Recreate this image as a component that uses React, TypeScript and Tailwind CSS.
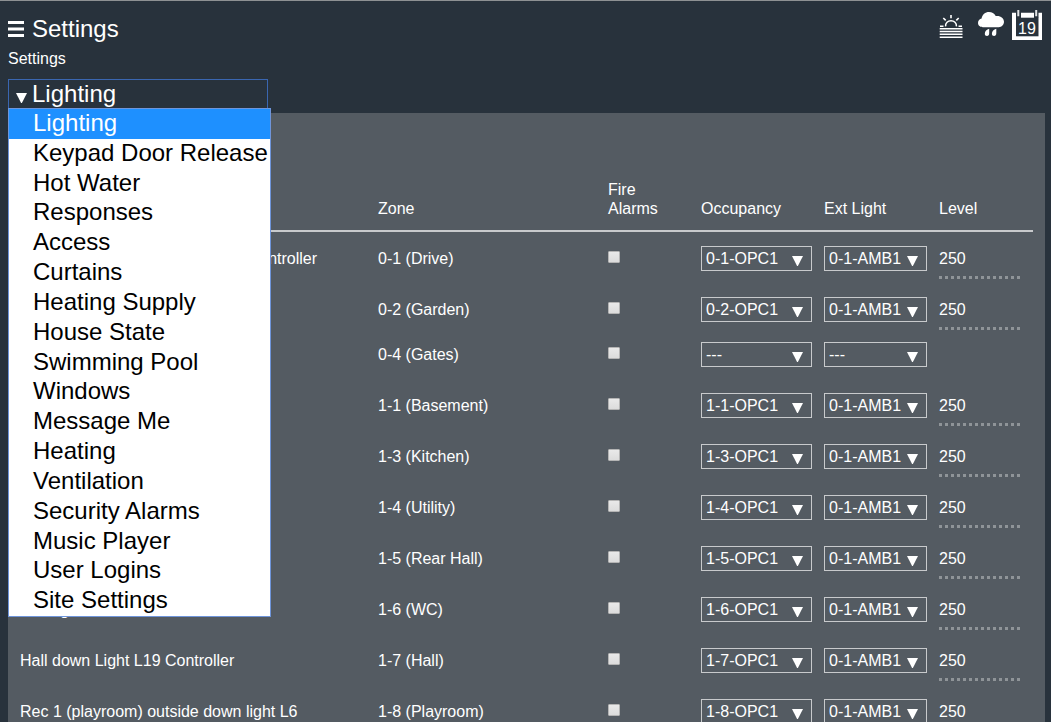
const SECTIONS = [
  "Lighting",
  "Keypad Door Release",
  "Hot Water",
  "Responses",
  "Access",
  "Curtains",
  "Heating Supply",
  "House State",
  "Swimming Pool",
  "Windows",
  "Message Me",
  "Heating",
  "Ventilation",
  "Security Alarms",
  "Music Player",
  "User Logins",
  "Site Settings",
];

type Zone = { name?: string; zone: string; occupancy: string; ext: string; level?: string };

const ZONES: Zone[] = [
  { name: "Drive and front garden lights L1 Controller", zone: "0-1 (Drive)", occupancy: "0-1-OPC1", ext: "0-1-AMB1", level: "250" },
  { zone: "0-2 (Garden)", occupancy: "0-2-OPC1", ext: "0-1-AMB1", level: "250" },
  { zone: "0-4 (Gates)", occupancy: "---", ext: "---" },
  { zone: "1-1 (Basement)", occupancy: "1-1-OPC1", ext: "0-1-AMB1", level: "250" },
  { zone: "1-3 (Kitchen)", occupancy: "1-3-OPC1", ext: "0-1-AMB1", level: "250" },
  { zone: "1-4 (Utility)", occupancy: "1-4-OPC1", ext: "0-1-AMB1", level: "250" },
  { zone: "1-5 (Rear Hall)", occupancy: "1-5-OPC1", ext: "0-1-AMB1", level: "250" },
  { name: "Ceiling WC", zone: "1-6 (WC)", occupancy: "1-6-OPC1", ext: "0-1-AMB1", level: "250" },
  { name: "Hall down Light L19 Controller", zone: "1-7 (Hall)", occupancy: "1-7-OPC1", ext: "0-1-AMB1", level: "250" },
  { name: "Rec 1 (playroom) outside down light L6", zone: "1-8 (Playroom)", occupancy: "1-8-OPC1", ext: "0-1-AMB1", level: "250" },
];

function Arrow({ className }: { className: string }) {
  return (
    <svg viewBox="0 0 11 10" className={className} aria-hidden="true">
      <path d="M0 0H11L5.9 10H5.1Z" fill="#fff" />
    </svg>
  );
}

function SmallSelect({ label, value, className }: { label: string; value: string; className: string }) {
  return (
    <div className={`relative h-[25px] ${className}`}>
      <select
        aria-label={label}
        defaultValue={value}
        className="block h-full w-full appearance-none border border-[#c8cacc] bg-transparent pl-1 text-base leading-[19px] text-white"
      >
        <option className="text-black">{value}</option>
      </select>
      <Arrow className="pointer-events-none absolute top-[10px] right-[9px] h-[10px] w-[11px]" />
    </div>
  );
}

function SunsetIcon() {
  return (
    <svg viewBox="0 0 24 30" className="h-[30px] w-6" fill="none" stroke="#fff" aria-label="Sunset">
      <path d="M6.600 16.400C6.300 12.800 8.900 10.800 12 10.800s5.700 2 5.400 5.600" strokeWidth="1.500" />
      <path d="M1 16.300h3.500M19.500 16.300H23" strokeWidth="1.500" />
      <path d="M12 5v3.200M4.300 8l2.400 2.400M19.700 8l-2.400 2.400" strokeWidth="1.600" />
      <path d="M.7 18.700h22.800M.7 21.500h22.800M.7 24.300h22.800M.7 27.200h22.800" strokeWidth="1.600" />
    </svg>
  );
}

function RainIcon() {
  return (
    <svg viewBox="0 -2 26 30" className="h-[30px] w-[26px]" fill="#fff" aria-label="Rain">
      <path d="M5 15.200C2.200 15.200 0 13.400 0 11c0-2.300 1.600-4 3.600-4.400C4.100 2.700 7.300 0 11 0c2.900 0 5.400 1.500 6.700 4C22.300 3.300 26 6 26 9.800c0 3-2.300 5.400-5.300 5.400Z" />
      <path d="M11.200 16.800v4.500c0 1.700-.9 2.700-2.200 2.700s-2.200-1-2.200-2.300c0-2.200 1.900-4.300 4.400-4.900ZM18.300 16.800v4.500c0 1.700-.9 2.700-2.200 2.700s-2.200-1-2.200-2.300c0-2.200 1.900-4.300 4.400-4.900Z" />
    </svg>
  );
}

function CalendarIcon() {
  return (
    <svg viewBox="0 0 30 30" className="size-[30px]" aria-label="Calendar">
      <path d="M0 2.700H4V8H9V2.700H22V8H26.500V2.700H30V30H0Z" fill="#fff" />
      <path d="M4 7.700h22.500V26.300H4Z" fill="#28323c" />
      <path d="M5.300 0h2v6.300h-2ZM23.200 0h2v6.300h-2Z" fill="#e2e4e6" />
      <text x="15" y="24" textAnchor="middle" fontSize="16" fill="#fff" fontFamily="Liberation Sans, sans-serif">
        19
      </text>
    </svg>
  );
}

export default function App() {
  return (
    <div className="h-screen overflow-hidden border-t border-[#8e9193] bg-[#28323c] font-['Liberation_Sans',Arial,sans-serif] text-base leading-[19px] text-white">
      <header className="flex items-start justify-between pt-[9px] pr-[9px] pl-2">
        <div>
          <div className="flex h-[38px] items-center gap-2">
            <button type="button" aria-label="Menu" className="block">
              <svg viewBox="0 0 16 16" className="size-4" fill="#fff" aria-hidden="true">
                <path d="M0 0h16v3H0ZM0 6.500h16v3H0ZM0 13h16v3H0Z" />
              </svg>
            </button>
            <h1 className="text-2xl leading-7">Settings</h1>
          </div>
          <label htmlFor="section" className="block leading-[22px]">
            Settings
          </label>
        </div>
        <div className="flex items-center gap-2">
          <div className="flex items-center gap-[15px]">
            <SunsetIcon />
            <RainIcon />
          </div>
          <CalendarIcon />
        </div>
      </header>

      <div className="relative z-10 mt-[9px] ml-2 w-[260px]">
        <select
          id="section"
          defaultValue="Lighting"
          className="block h-[30px] w-full appearance-none border border-[#3a66b0] bg-transparent pl-[23px] text-2xl leading-7 text-white outline-none"
        >
          {SECTIONS.map((s) => (
            <option key={s} className="text-black">
              {s}
            </option>
          ))}
        </select>
        <Arrow className="pointer-events-none absolute top-[14px] left-2 h-[10px] w-[11px]" />
        <ul
          role="listbox"
          aria-label="Sections"
          className="absolute top-[29px] left-0 flex h-[509px] w-[263px] flex-col border border-[#6f95da] bg-white text-2xl text-black"
        >
          {SECTIONS.map((s, i) => (
            <li
              key={s}
              role="option"
              aria-selected={i === 0}
              className="flex flex-1 items-center pb-[2px] pl-6 leading-[26px] whitespace-nowrap aria-selected:bg-[#1e90ff] aria-selected:text-white"
            >
              {s}
            </li>
          ))}
        </ul>
      </div>

      <main className="mt-1 mr-[6px] ml-2 bg-[#545b62] px-3 pt-[67px]">
        <table className="w-full table-fixed border-separate border-spacing-0 text-left">
          <colgroup>
            <col />
            <col className="w-[230px]" />
            <col className="w-[93px]" />
            <col className="w-[123px]" />
            <col className="w-[115px]" />
            <col className="w-[94px]" />
          </colgroup>
          <thead>
            <tr className="align-bottom [&>*]:border-b-2 [&>*]:border-[#c8cacc] [&>*]:p-0 [&>*]:pb-3 [&>*]:font-normal">
              <td />
              <th>Zone</th>
              <th>
                Fire
                <br />
                Alarms
              </th>
              <th>Occupancy</th>
              <th>Ext Light</th>
              <th>Level</th>
            </tr>
          </thead>
          <tbody>
            {ZONES.map((z) => (
              <tr
                key={z.zone}
                className={
                  z.level
                    ? "h-[51px] align-top [&>td]:p-0 [&>td]:pt-[14px]"
                    : "h-[45px] align-top [&>td]:p-0 [&>td]:pt-2"
                }
              >
                <td className="leading-[25px] whitespace-nowrap">{z.name}</td>
                <td className="leading-[25px] whitespace-nowrap">{z.zone}</td>
                <td>
                  <input
                    type="checkbox"
                    aria-label={`${z.zone} fire alarms`}
                    className="mt-[5px] block size-3 appearance-none rounded-[1px] border border-[#b4b4b4] bg-linear-to-b from-[#e9e9e9] to-[#dcdcdc] checked:bg-blue-500"
                  />
                </td>
                <td>
                  <SmallSelect label={`${z.zone} occupancy`} value={z.occupancy} className="w-[111px]" />
                </td>
                <td>
                  <SmallSelect label={`${z.zone} external light`} value={z.ext} className="w-[103px]" />
                </td>
                <td>
                  {z.level && (
                    <input
                      type="text"
                      aria-label={`${z.zone} level`}
                      defaultValue={z.level}
                      className="block h-[33px] w-[82px] bg-[repeating-linear-gradient(90deg,#8f9498_0_3px,transparent_3px_6px)] bg-[length:100%_3px] bg-bottom bg-no-repeat pb-2 leading-[25px] outline-none"
                    />
                  )}
                </td>
              </tr>
            ))}
          </tbody>
        </table>
      </main>
    </div>
  );
}
